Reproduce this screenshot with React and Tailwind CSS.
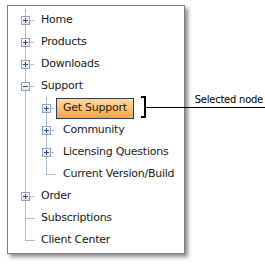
import React from "react";

const LINE = "#adbdd6";

function Box({ cx, cy, expanded }) {
  const x = cx - 4 + 0.5;
  const y = cy - 4 + 0.5;
  return (
    <g>
      <rect x={x} y={y} width="8" height="8" fill="url(#bx)" stroke="#8da5cc" />
      <line x1={cx - 2} y1={cy + 0.5} x2={cx + 3} y2={cy + 0.5} stroke="#2f4f8a" />
      {!expanded && <line x1={cx + 0.5} y1={cy - 2} x2={cx + 0.5} y2={cy + 3} stroke="#2f4f8a" />}
    </g>
  );
}

function Cell({ width, lx, type, box, expanded, tickEnd }) {
  const cy = 11;
  const x = lx + 0.5;
  return (
    <svg width={width} height="22" className="shrink-0 block">
      <defs>
        <linearGradient id="bx" x1="0" y1="0" x2="0" y2="1">
          <stop offset="0" stopColor="#ffffff" />
          <stop offset="1" stopColor="#dbe4f2" />
        </linearGradient>
      </defs>
      {type !== "none" && (
        <>
          {type === "pipe" ? (
            <line x1={x} y1="0" x2={x} y2="22" stroke={LINE} />
          ) : box ? (
            <>
              <line x1={x} y1="0" x2={x} y2={cy - 4} stroke={LINE} />
              {type === "tee" && <line x1={x} y1={cy + 5} x2={x} y2="22" stroke={LINE} />}
            </>
          ) : (
            <line x1={x} y1="0" x2={x} y2={type === "tee" ? 22 : cy + 1} stroke={LINE} />
          )}
          {type !== "pipe" && (
            <line x1={box ? lx + 5 : lx + 1} y1={cy + 0.5} x2={tickEnd} y2={cy + 0.5} stroke={LINE} />
          )}
          {box && <Box cx={lx} cy={cy} expanded={expanded} />}
        </>
      )}
    </svg>
  );
}

function Row({ level, outer, inner, box, expanded, label, selected }) {
  return (
    <div className="flex h-[22px] items-center">
      {level === 0 ? (
        <>
          <Cell width={32} lx={17} type={outer} box={box} expanded={expanded} tickEnd={box ? 26 : 27} />
          <span className="pl-[1px] leading-[22px] whitespace-nowrap">{label}</span>
        </>
      ) : (
        <>
          <Cell width={32} lx={17} type={outer} />
          <Cell width={16} lx={6} type={inner} box={box} expanded={expanded} tickEnd={box ? 14 : 16} />
          {selected ? (
            <span className="h-[21px] mt-[1px] flex items-center px-[6px] border border-[#1d3a86] bg-gradient-to-b from-[#ffdca0] to-[#f7a548] whitespace-nowrap">
              {label}
            </span>
          ) : (
            <span className="h-[21px] flex items-center px-[6px] border border-transparent whitespace-nowrap">
              {label}
            </span>
          )}
        </>
      )}
    </div>
  );
}

export default function App() {
  return (
    <div
      className="relative w-[265px] h-[267px] bg-white text-[#1a1a1a] overflow-hidden"
      style={{ fontFamily: '"DejaVu Sans", Verdana, sans-serif' }}
    >
      <div className="ml-[7px] mt-[5px] w-[178px] h-[249px] border border-[#7c7c7c] bg-white shadow-[3px_3px_4px_rgba(0,0,0,0.45)] pt-[3px] text-[11px] tracking-[-0.25px]">
        <Row level={0} outer="tee" box label="Home" />
        <Row level={0} outer="tee" box label="Products" />
        <Row level={0} outer="tee" box label="Downloads" />
        <Row level={0} outer="tee" box expanded label="Support" />
        <Row level={1} outer="pipe" inner="tee" box label="Get Support" selected />
        <Row level={1} outer="pipe" inner="tee" box label="Community" />
        <Row level={1} outer="pipe" inner="tee" box label="Licensing Questions" />
        <Row level={1} outer="pipe" inner="last" label="Current Version/Build" />
        <Row level={0} outer="tee" box label="Order" />
        <Row level={0} outer="tee" label="Subscriptions" />
        <Row level={0} outer="last" label="Client Center" />
      </div>

      <div className="absolute left-[141px] top-[96px] w-[5px] h-[22px] border-t-2 border-b-2 border-r-2 border-black" />
      <div className="absolute left-[146px] top-[107px] w-[119px] h-px bg-black" />
      <div className="absolute right-[2px] top-[94px] text-[10px] leading-[12px] tracking-[-0.25px] text-black whitespace-nowrap">
        Selected node
      </div>
    </div>
  );
}
